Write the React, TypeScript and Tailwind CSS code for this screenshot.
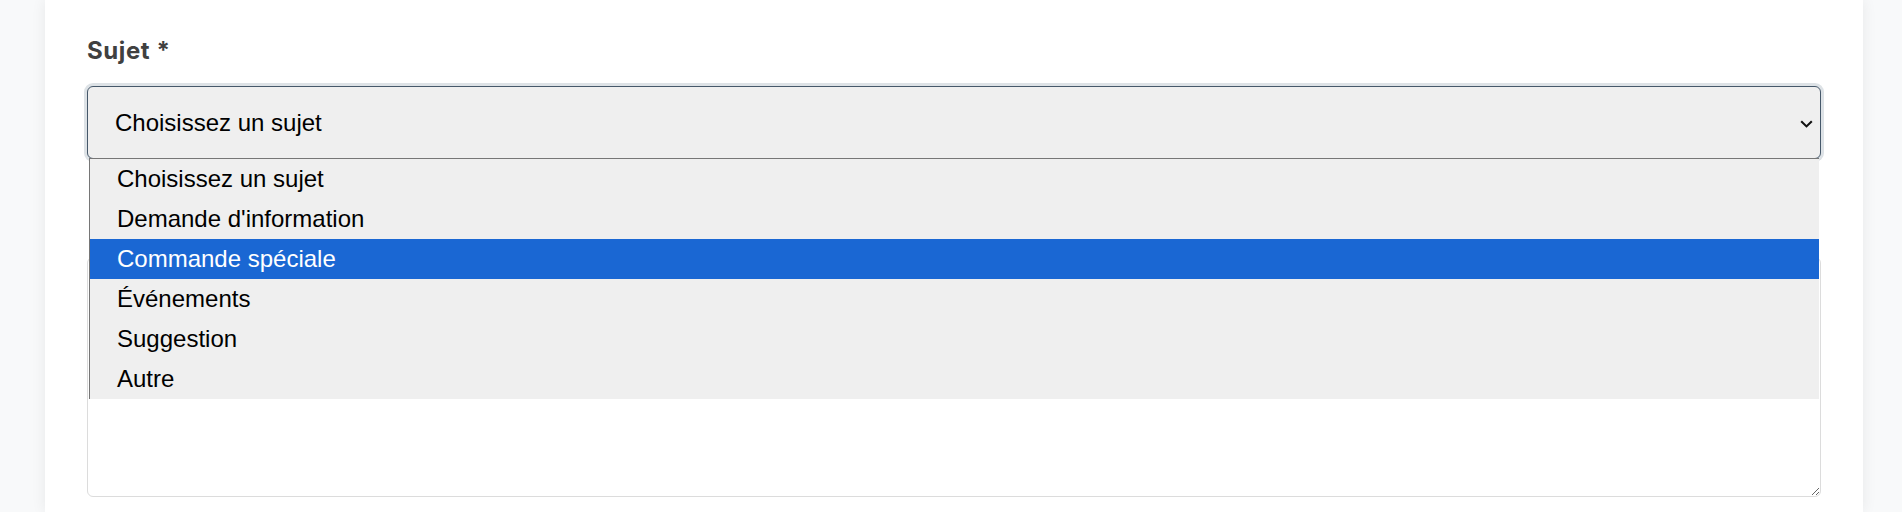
import React from "react";

const options = [
  "Choisissez un sujet",
  "Demande d'information",
  "Commande spéciale",
  "Événements",
  "Suggestion",
  "Autre",
];

export default function App() {
  return (
    <div className="min-h-[512px] h-[512px] overflow-hidden bg-[#f8f9fa] pl-[45px] pr-[39px]">
      <div className="h-full bg-white shadow-[0_0_14px_rgba(0,0,0,0.07)] px-[42px] pt-[36px]">
        <label
          className="block text-[24px] leading-[29px] font-bold text-[#404040] tracking-[0.6px]"
          style={{ fontFamily: "Inter, 'Noto Sans', sans-serif" }}
        >
          Sujet *
        </label>
        <div className="relative mt-[21px]">
          <div
            className="h-[73px] flex items-center justify-between rounded-[6px] border border-[#46586a] bg-[#efefef] pl-[27px] pr-[7px] shadow-[0_0_0_3px_#dde2e6] text-[24px] text-black"
            style={{ fontFamily: "'Liberation Sans', Arial, sans-serif" }}
          >
            <span>Choisissez un sujet</span>
            <svg width="13" height="8" viewBox="0 0 13 8" className="mt-[2px]">
              <path d="M1.2 1.2 L6.5 6.4 L11.8 1.2" fill="none" stroke="#111" strokeWidth="2.1" />
            </svg>
          </div>
          <ul
            className="absolute z-10 left-[2px] right-[2px] top-[calc(100%-1px)] bg-[#efefef] border-l border-t border-[#767676] text-[24px] text-black"
            style={{ fontFamily: "'Liberation Sans', Arial, sans-serif" }}
          >
            {options.map((o, i) => (
              <li
                key={o}
                className={
                  i === 2
                    ? "h-[40px] flex items-center pl-[27px] bg-[#1a67d3] text-white"
                    : "h-[40px] flex items-center pl-[27px]"
                }
              >
                {o}
              </li>
            ))}
          </ul>
        </div>
        <textarea
          className="mt-[98px] block w-full h-[240px] rounded-[6px] border border-[#dcdcdc] bg-white outline-none"
          aria-label="Message"
        />
      </div>
    </div>
  );
}
